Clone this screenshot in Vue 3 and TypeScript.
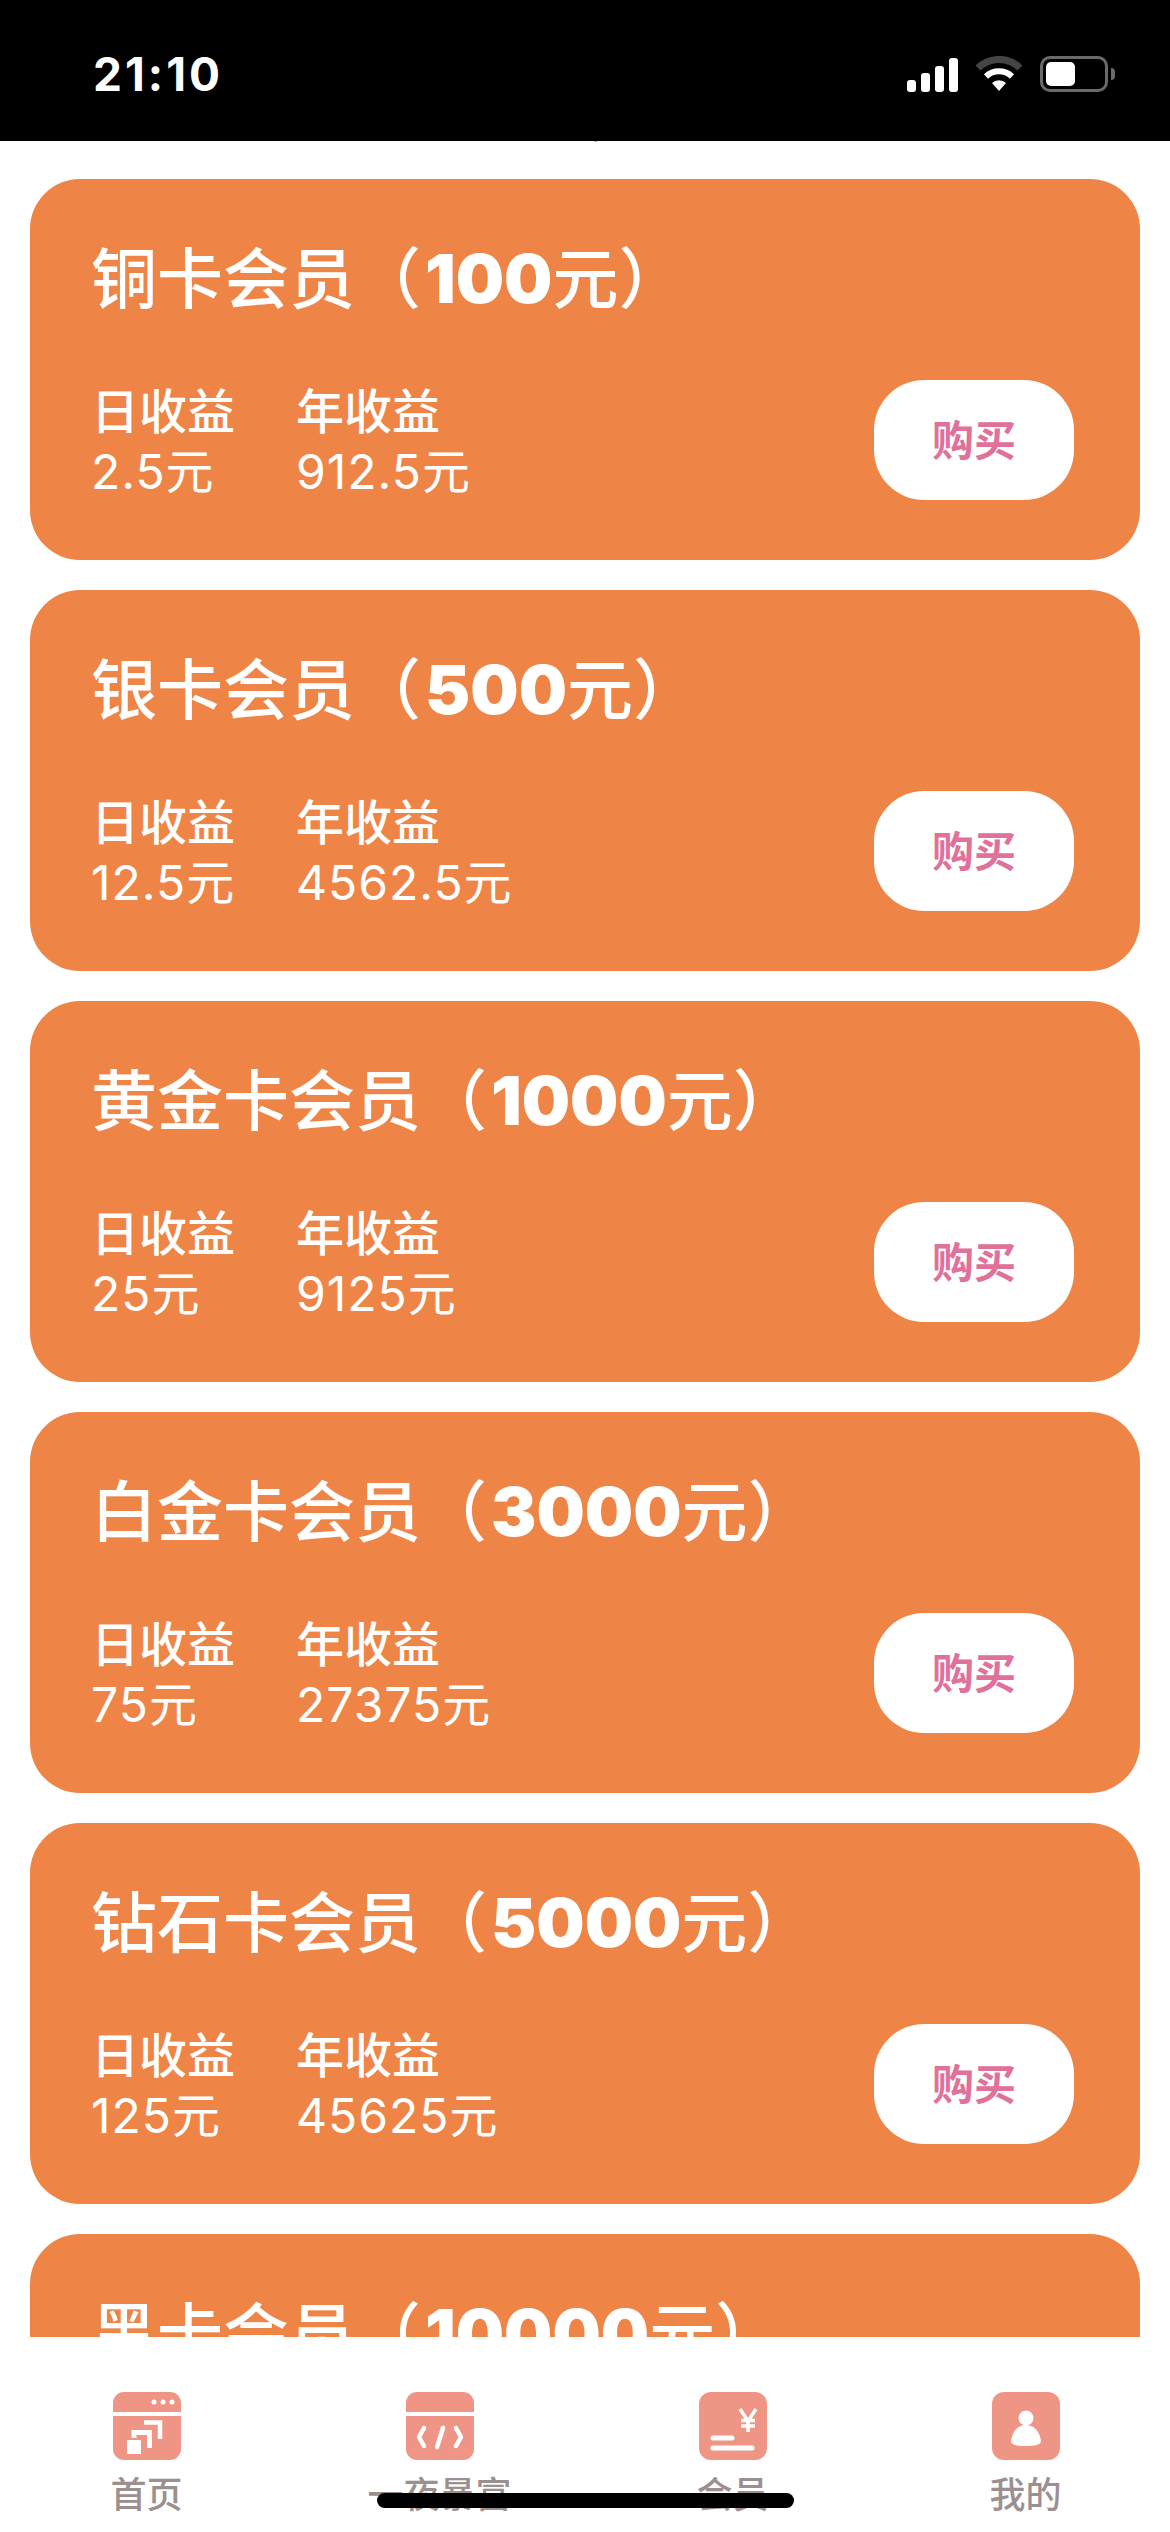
<script setup lang="ts">
interface Plan {
  name: string
  price: number
  daily: string
  yearly: string
}

const plans: Plan[] = [
  { name: '铜卡会员', price: 100, daily: '2.5元', yearly: '912.5元' },
  { name: '银卡会员', price: 500, daily: '12.5元', yearly: '4562.5元' },
  { name: '黄金卡会员', price: 1000, daily: '25元', yearly: '9125元' },
  { name: '白金卡会员', price: 3000, daily: '75元', yearly: '27375元' },
  { name: '钻石卡会员', price: 5000, daily: '125元', yearly: '45625元' },
  { name: '黑卡会员', price: 10000, daily: '250元', yearly: '91250元' },
]
</script>

<template>
  <div class="page">
    <header class="status">
      <span class="time">21:10</span>
      <div class="status-icons">
        <svg width="51" height="34" viewBox="0 0 51 34" fill="#fff">
          <rect x="0" y="22" width="9" height="12" rx="3" />
          <rect x="14" y="15" width="9" height="19" rx="3" />
          <rect x="28" y="8" width="9" height="26" rx="3" />
          <rect x="42" y="0" width="9" height="34" rx="3" />
        </svg>
        <svg width="48" height="36" viewBox="0 0 48 36" fill="none">
          <path d="M3 12 A30 30 0 0 1 45 12" stroke="#444" stroke-width="7" />
          <path d="M11 20.5 A19 19 0 0 1 37 20.5" stroke="#fff" stroke-width="6" />
          <path d="M17 27 L24 35 L31 27 A10 10 0 0 0 17 27 Z" fill="#fff" />
        </svg>
        <div class="battery">
          <div class="battery-fill"></div>
          <div class="battery-cap"></div>
        </div>
      </div>
    </header>

    <main class="scroll">
      <!-- 上一屏滚动内容，只露出文字底边 -->
      <div class="clipped-line"><span>会员等级不同每日可获收益，到期后可继续购买使用</span></div>
      <section v-for="plan in plans" :key="plan.name" class="card">
        <h2 class="title">{{ plan.name }}（<b>{{ plan.price }}</b>元）</h2>
        <div class="card-row">
          <div class="stats">
            <div class="stat">
              <span>日收益</span>
              <span class="num">{{ plan.daily }}</span>
            </div>
            <div class="stat">
              <span>年收益</span>
              <span class="num">{{ plan.yearly }}</span>
            </div>
          </div>
          <button class="buy"><span>购买</span></button>
        </div>
      </section>
    </main>

    <nav class="tabs">
      <div class="tab">
        <svg width="68" height="68" viewBox="0 0 68 68">
          <path d="M0 20 V11 A11 11 0 0 1 11 0 H57 A11 11 0 0 1 68 11 V20 Z" fill="#ef9585" />
          <path d="M0 24 H68 V57 A11 11 0 0 1 57 68 H11 A11 11 0 0 1 0 57 Z" fill="#ef9585" />
          <g fill="#fff">
            <circle cx="41" cy="10" r="2.5" />
            <circle cx="50" cy="10" r="2.5" />
            <circle cx="59" cy="10" r="2.5" />
            <rect x="14" y="48" width="14" height="14" />
          </g>
          <g fill="none" stroke="#fff">
            <path d="M21 46 V40.5 H36.5 V56" stroke-width="5" />
            <path d="M31 30.5 H47 V47" stroke-width="4.5" />
          </g>
        </svg>
        <span>首页</span>
      </div>
      <div class="tab">
        <svg width="68" height="68" viewBox="0 0 68 68">
          <path d="M0 20 V11 A11 11 0 0 1 11 0 H57 A11 11 0 0 1 68 11 V20 Z" fill="#ef9585" />
          <path d="M0 24 H68 V57 A11 11 0 0 1 57 68 H11 A11 11 0 0 1 0 57 Z" fill="#ef9585" />
          <g fill="none" stroke="#fff" stroke-width="4.5" stroke-linecap="round" stroke-linejoin="round">
            <path d="M18 36 L13 45 L18 54" />
            <path d="M50 36 L55 45 L50 54" />
            <path d="M37 36 L31 55" />
          </g>
        </svg>
        <span>一夜暴富</span>
      </div>
      <div class="tab">
        <svg width="68" height="68" viewBox="0 0 68 68">
          <rect width="68" height="68" rx="12" fill="#ef9585" />
          <g fill="none" stroke="#fff" stroke-width="3.5">
            <path d="M41 17 L49 29 L57 17" />
            <path d="M49 29 V40" />
            <path d="M42 28.5 H56 M42 34 H56" />
          </g>
          <g fill="none" stroke="#fff" stroke-width="5" stroke-linecap="round">
            <path d="M14 46 H33" />
            <path d="M14 56 H53" />
          </g>
        </svg>
        <span>会员</span>
      </div>
      <div class="tab">
        <svg width="68" height="68" viewBox="0 0 68 68">
          <rect width="68" height="68" rx="12" fill="#ef9585" />
          <circle cx="34" cy="26" r="7.5" fill="#fff" />
          <path d="M34 33 C24 33 20 42 19 49 C19 53 26 54 34 54 C42 54 49 53 49 49 C48 42 44 33 34 33 Z" fill="#fff" />
        </svg>
        <span>我的</span>
      </div>
      <div class="home-bar"></div>
    </nav>
  </div>
</template>

<style>
html,
body {
  margin: 0;
  background: #fff;
}
</style>

<style scoped>
.page {
  width: 1170px;
  height: 2532px;
  display: flex;
  flex-direction: column;
  overflow: hidden;
  background: #fff;
  font-family: Inter, "Noto Sans CJK SC", sans-serif;
}

.status {
  flex: none;
  height: 141px;
  box-sizing: border-box;
  padding: 52px 62px 0 93px;
  display: flex;
  justify-content: space-between;
  align-items: flex-start;
  background: #000;
  color: #fff;
}

.time {
  font-size: 46px;
  font-weight: 700;
  line-height: 44px;
  letter-spacing: 3px;
}

.status-icons {
  display: flex;
  align-items: flex-end;
  gap: 17px;
  padding-top: 4px;
}

.battery {
  position: relative;
  width: 68px;
  height: 36px;
  box-sizing: border-box;
  border: 3px solid #6a6a6a;
  border-radius: 10px;
  padding: 3px;
}

.battery-fill {
  width: 29px;
  height: 24px;
  background: #fff;
  border-radius: 5px;
}

.battery-cap {
  position: absolute;
  right: -10px;
  top: 9px;
  width: 4px;
  height: 12px;
  background: #6a6a6a;
  border-radius: 0 4px 4px 0;
}

.scroll {
  flex: 1;
  min-height: 0;
  overflow: hidden;
}

.clipped-line {
  height: 6px;
  margin-bottom: 32px;
  padding-left: 60px;
  overflow: hidden;
  font-size: 44px;
  white-space: nowrap;
  color: #555;
}

.clipped-line span {
  display: block;
  margin-top: -45px;
  line-height: 50px;
}

.card {
  box-sizing: border-box;
  height: 381px;
  margin: 0 30px 30px;
  padding: 61px 66px 60px 61px;
  border-radius: 50px;
  background: #ee8547;
  color: #fff;
  display: flex;
  flex-direction: column;
}

.title {
  margin: 0;
  font-size: 66px;
  font-weight: 500;
  line-height: 76px;
  white-space: nowrap;
}

.title b {
  margin-left: 4px;
  font-size: 68px;
  font-weight: 900;
}

.card-row {
  margin-top: auto;
  display: flex;
  justify-content: space-between;
  align-items: flex-end;
}

.stats {
  position: relative;
  top: 2px;
  display: flex;
  gap: 63px;
}

.stat {
  width: 142px;
  display: flex;
  flex-direction: column;
  font-size: 48px;
  font-weight: 500;
  line-height: 60px;
  white-space: nowrap;
}

.num {
  font-weight: 400;
  letter-spacing: 1px;
}

.buy {
  width: 200px;
  height: 120px;
  border: none;
  border-radius: 50px;
  background: #fff;
  color: #e0719b;
  font-family: inherit;
  font-size: 42px;
  font-weight: 600;
  padding: 0 0 6px;
}

.tabs {
  position: relative;
  flex: none;
  height: 195px;
  box-sizing: border-box;
  padding-top: 55px;
  display: grid;
  grid-template-columns: repeat(4, 293px);
  background: #fff;
}

.tab {
  display: flex;
  flex-direction: column;
  align-items: center;
  gap: 14px;
  font-size: 36px;
  font-weight: 500;
  line-height: 42px;
  color: #9b8f90;
}

.home-bar {
  position: absolute;
  left: 377px;
  top: 156px;
  width: 417px;
  height: 15px;
  border-radius: 8px;
  background: #000;
}
</style>
